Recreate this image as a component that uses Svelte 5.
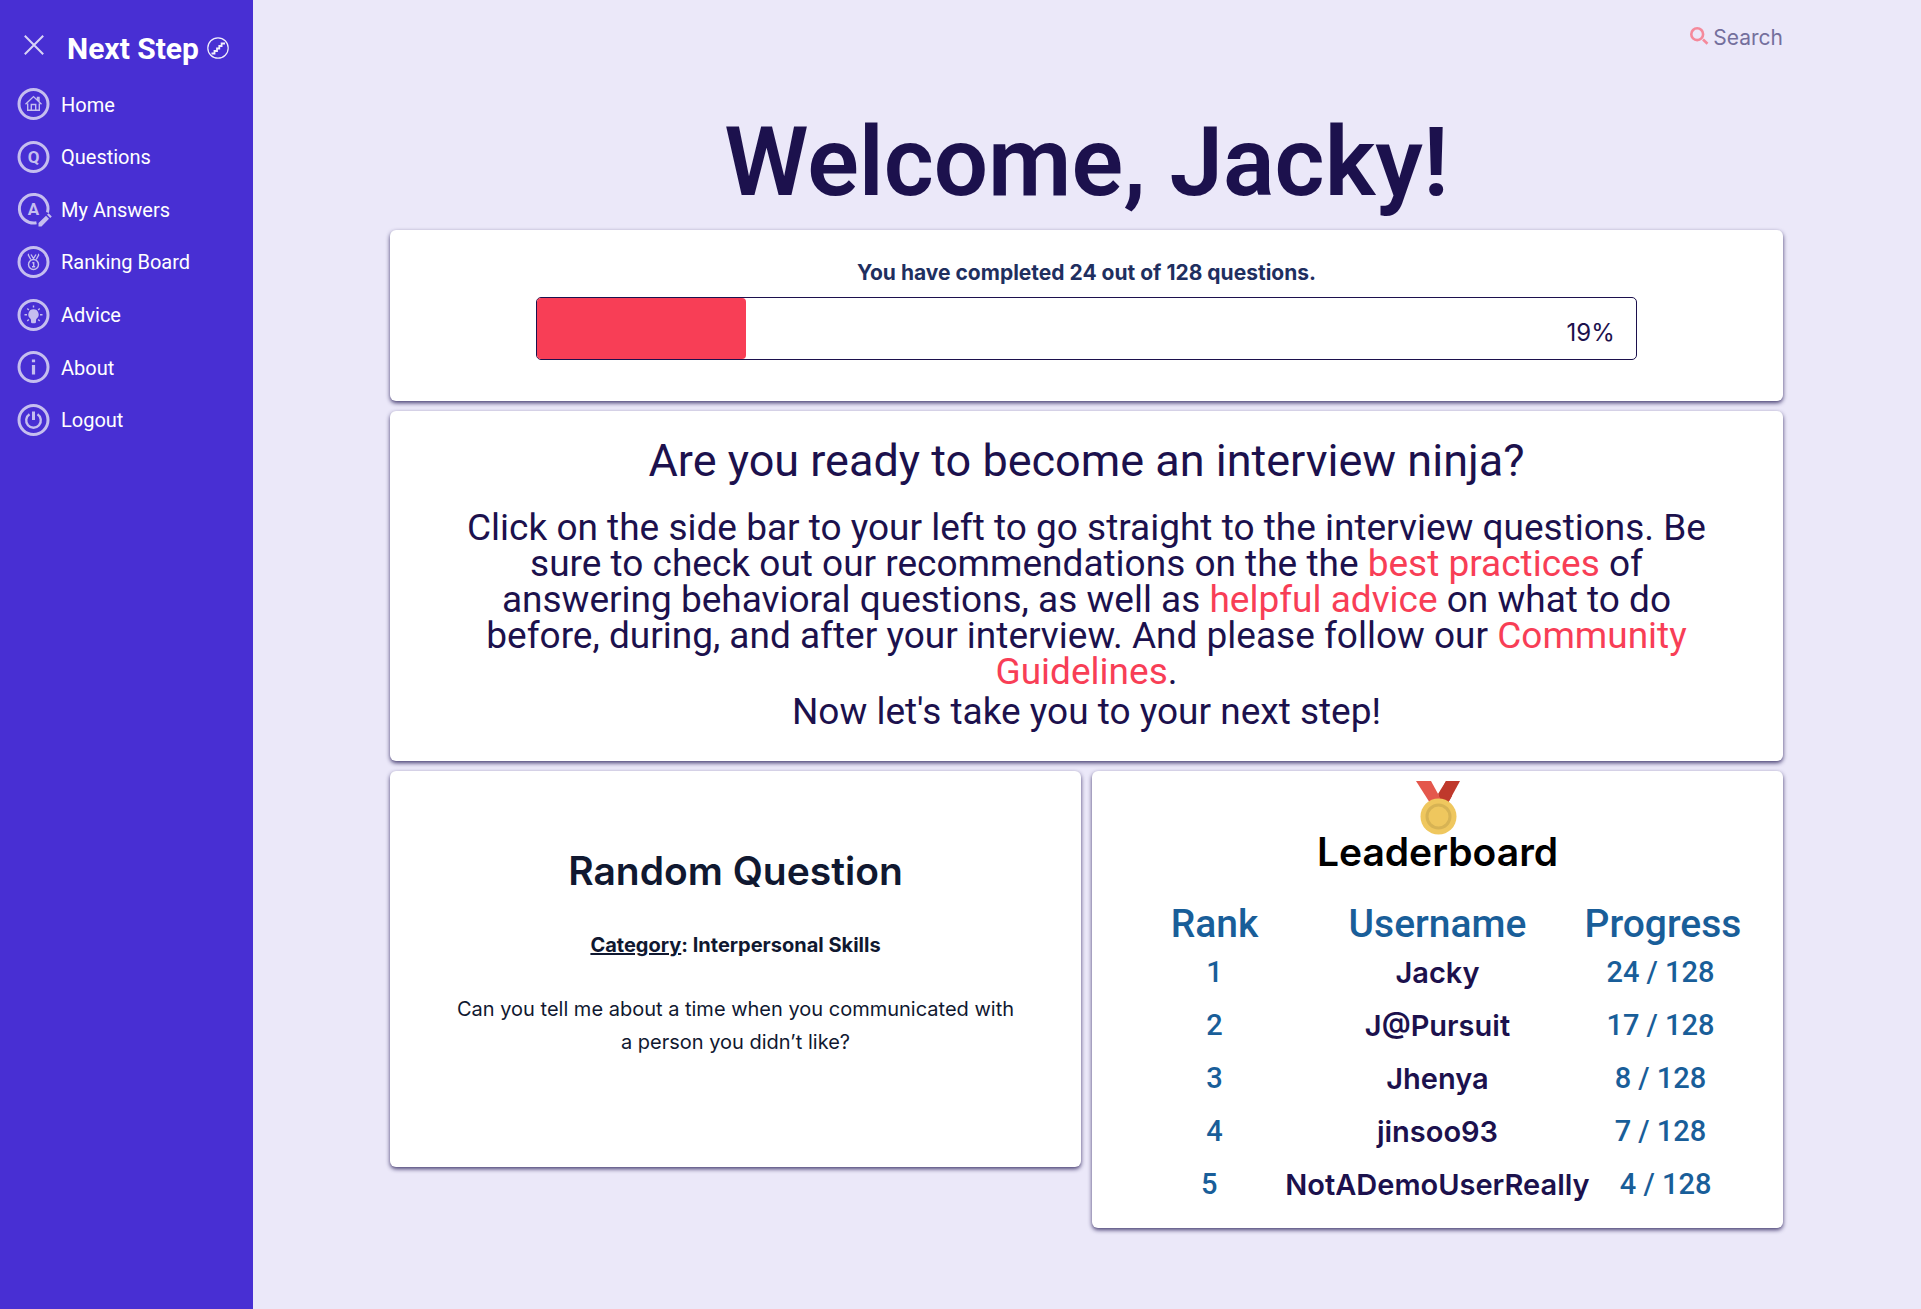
<script lang="ts">
  const completed = 24;
  const total = 128;
  const percent = Math.round((completed / total) * 100);

  const links = [
    { icon: 'home', label: 'Home' },
    { icon: 'questions', label: 'Questions' },
    { icon: 'answers', label: 'My Answers' },
    { icon: 'ranking', label: 'Ranking Board' },
    { icon: 'advice', label: 'Advice' },
    { icon: 'about', label: 'About' },
    { icon: 'logout', label: 'Logout' },
  ];

  const leaders = [
    { name: 'Jacky', done: 24 },
    { name: 'J@Pursuit', done: 17 },
    { name: 'Jhenya', done: 8 },
    { name: 'jinsoo93', done: 7 },
    { name: 'NotADemoUserReally', done: 4 },
  ];
</script>

<div class="page">
  <aside class="sidebar">
    <header class="brand">
      <button class="close" type="button" aria-label="Close menu">
        <svg width="20" height="20" viewBox="0 0 20 20"><path d="M.8.8 19.2 19.2M19.2.8.8 19.2" /></svg>
      </button>
      <a class="title" href="#top">
        Next Step
        <svg width="22" height="22" viewBox="0 0 22 22" aria-hidden="true">
          <circle cx="11" cy="11" r="10.2" />
          <path class="stairs" d="M4.500 16.500H7.500V14H10V11.500H12.300V9H14.600V6.500H18" />
        </svg>
      </a>
    </header>
    <nav>
      {#each links as link}
        <a href="#{link.icon}">
          <svg width="36" height="36" viewBox="0 0 36 36" aria-hidden="true">
            {#if link.icon === 'answers'}
              <path class="ring" d="M20.500 31.800A14.300 14.300 0 1 1 31.500 21.500" />
              <text x="17.500" y="24">A</text>
              <path class="solid" d="M22.500 35.500V32L30 24.800L33 27.800L25.500 35.500ZM31 23.800L32.600 22.300L35.800 25.400L34.200 27Z" />
            {:else}
              <circle class="ring" cx="17.500" cy="18" r="14.500" />
            {/if}
            {#if link.icon === 'home'}
              <path class="thin" d="M9.500 18.300 17.500 10.600 25.500 18.300M11.700 17.500V24.200H23.300V17.500M15.300 24V18.500H19.700V24M21.500 14V11.500H23V15.500" />
            {:else if link.icon === 'questions'}
              <text x="17.500" y="24">Q</text>
            {:else if link.icon === 'ranking'}
              <circle class="thin" cx="17.500" cy="20.500" r="5" />
              <path class="thin" d="M16.300 18.700H17.700V22.500M16 22.700H19.200M12 10.500 14.800 15.500M15 10.500 17.500 14.500 20 10.500M23 10.500 20.200 15.500M12 10.500H13M22 10.500H23" />
            {:else if link.icon === 'advice'}
              <path class="solid" d="M17.500 12.300a5.200 5.200 0 0 1 3.300 9.200c-.7.600-.8 1.200-.8 2v1.200q0 1.500-1.300 1.500h-2.400q-1.300 0-1.300-1.500v-1.200c0-.8-.1-1.400-.8-2a5.200 5.200 0 0 1 3.300-9.200z" />
              <path class="thin" d="M17.500 8.500V10.500M8.500 17.700H11M24 17.700H26.500M11.300 11.500 12.800 13M23.700 11.500 22.200 13M11.300 24 12.800 22.500M23.700 24 22.200 22.500" />
            {:else if link.icon === 'about'}
              <path class="solid" d="M15.900 10.500h3.200v2.800h-3.200zM15.900 16h3.200v9.500h-3.200z" />
            {:else if link.icon === 'logout'}
              <path class="power" d="M13.500 12.300A7.300 7.300 0 1 0 21.500 12.300" />
              <path class="power wide" d="M17.500 9.500V18" />
            {/if}
          </svg>
          <span>{link.label}</span>
        </a>
      {/each}
    </nav>
  </aside>

  <main id="top">
    <a class="search" href="#search">
      <svg width="19" height="18" viewBox="0 0 19 18" aria-hidden="true">
        <circle cx="7.200" cy="7.200" r="5.900" />
        <path d="M13 12.500 17.500 16.800" />
      </svg>
      Search
    </a>
    <h1>Welcome, Jacky!</h1>

    <section class="card status">
      <p id="progress-label">You have completed {completed} out of {total} questions.</p>
      <div class="track" role="progressbar" aria-labelledby="progress-label" aria-valuenow={percent} aria-valuemin="0" aria-valuemax="100">
        <div class="fill" style="width: {percent}%"></div>
        <span>{percent}%</span>
      </div>
    </section>

    <section class="card intro">
      <h2>Are you ready to become an interview ninja?</h2>
      <p>
        Click on the side bar to your left to go straight to the interview questions. Be
        sure to check out our recommendations on the the <a href="#practices">best practices</a> of
        answering behavioral questions, as well as <a href="#advice">helpful advice</a> on what to do
        before, during, and after your interview. And please follow our
        <a href="#guidelines">Community Guidelines</a>.
      </p>
      <p class="next">Now let's take you to your next step!</p>
    </section>

    <div class="columns">
      <section class="card random">
        <h2>Random Question</h2>
        <h3><u>Category</u>: Interpersonal Skills</h3>
        <p>Can you tell me about a time when you communicated with a person you didn’t like?</p>
      </section>

      <section class="card leaders">
        <svg width="44" height="54" viewBox="0 0 44 54" aria-hidden="true">
          <path fill="#bf392c" d="M30 0H44L32 22H19Z" />
          <path fill="#e4574c" d="M0 0H15L27 22H14Z" />
          <path fill="#bf392c" d="M22 13L27 22H32L36 15L30 0Z" />
          <circle cx="22.500" cy="35.500" r="18" fill="#efc75e" />
          <circle cx="22.500" cy="35.500" r="11.500" fill="none" stroke="#d7b354" stroke-width="3" />
        </svg>
        <h2>Leaderboard</h2>
        <table>
          <thead>
            <tr><th scope="col">Rank</th><th class="user" scope="col">Username</th><th scope="col">Progress</th></tr>
          </thead>
          <tbody>
            {#each leaders as leader, i}
              <tr><td>{i + 1}</td><td class="user">{leader.name}</td><td>{leader.done} / {total}</td></tr>
            {/each}
          </tbody>
        </table>
      </section>
    </div>
  </main>
</div>

<style>
  :global(body) {
    margin: 0;
    background: #ebe8f9;
  }

  .page {
    --ink: #1c114d;
    --red: #f83e56;
    --blue: #195e99;
    --round: Inter, 'Open Sans', sans-serif;
    display: flex;
    min-height: 100vh;
    color: var(--ink);
    font-family: Roboto, sans-serif;
  }

  h1, h2, h3, p {
    margin: 0;
  }

  a {
    color: inherit;
    text-decoration: none;
  }

  .sidebar {
    box-sizing: border-box;
    flex: 0 0 253px;
    padding-top: 24px;
    background: #482fd3;
    color: #fff;
  }

  .brand {
    display: flex;
    align-items: center;
    gap: 23px;
    height: 48px;
    padding-left: 24px;
  }

  .close {
    display: flex;
    padding: 0 0 6px;
    border: 0;
    background: none;
    cursor: pointer;
  }

  .close svg {
    fill: none;
    stroke: #d8d3f6;
    stroke-width: 2;
  }

  .title {
    display: flex;
    align-items: center;
    gap: 8px;
    font-size: 30px;
    font-weight: 700;
    white-space: nowrap;
  }

  .title svg {
    fill: none;
    stroke: #f1effc;
    stroke-width: 1.200;
  }

  .title .stairs {
    stroke-width: 1.800;
  }

  nav {
    display: grid;
    grid-auto-rows: 1fr;
    height: 368px;
    padding: 6px 0 0 16px;
  }

  nav a {
    display: flex;
    align-items: center;
    gap: 9px;
    font-size: 20px;
  }

  nav span {
    padding-top: 1px;
  }

  nav svg {
    fill: none;
    stroke: #c5beef;
  }

  nav .ring {
    stroke-width: 3;
  }

  nav .thin {
    stroke-width: 1.400;
  }

  nav .power {
    stroke-width: 2.400;
  }

  nav .wide {
    stroke-width: 3;
  }

  nav .solid, nav text {
    fill: #c5beef;
    stroke: none;
  }

  nav text {
    font-size: 17px;
    font-weight: 700;
    text-anchor: middle;
  }

  main {
    display: flex;
    flex: 1;
    flex-direction: column;
    min-width: 0;
    padding: 23px 138px 80px 137px;
  }

  .search {
    display: flex;
    align-items: center;
    align-self: flex-end;
    gap: 4px;
    height: 28px;
    color: #746f9d;
    font-family: var(--round);
    font-size: 21px;
  }

  .search svg {
    padding-bottom: 2px;
    fill: none;
    stroke: #f5899b;
    stroke-width: 2.600;
  }

  h1 {
    margin-top: 53px;
    font-size: 96px;
    font-weight: 600;
    line-height: 117px;
    text-align: center;
  }

  .card {
    box-sizing: border-box;
    border-radius: 6px;
    background: #fff;
    box-shadow: 0 2px 4px rgb(28 17 77 / 80%);
    text-align: center;
  }

  .status {
    display: flex;
    flex-direction: column;
    align-items: center;
    margin-top: 9px;
    padding: 28px 0 41px;
  }

  .status p {
    color: #1f2f5f;
    font-family: var(--round);
    font-size: 21px;
    font-weight: 700;
    line-height: 30px;
  }

  .track {
    display: flex;
    box-sizing: border-box;
    align-items: stretch;
    justify-content: space-between;
    width: 79%;
    height: 63px;
    margin-top: 9px;
    border: 1px solid var(--ink);
    border-radius: 5px;
  }

  .fill {
    border-radius: 4px;
    background: var(--red);
  }

  .track span {
    padding: 5px 21px 0 0;
    font-family: var(--round);
    font-size: 24px;
    line-height: 60px;
  }

  .intro {
    margin-top: 10px;
    padding: 23px 66px 31px;
  }

  .intro h2 {
    font-size: 45px;
    font-weight: 400;
    line-height: 54px;
  }

  .intro p {
    margin-top: 22px;
    font-size: 37px;
    line-height: 36px;
  }

  .intro .next {
    margin-top: 4px;
  }

  .intro a {
    color: var(--red);
  }

  .columns {
    display: grid;
    grid-template-columns: 1fr 1fr;
    align-items: start;
    gap: 11px;
    margin-top: 10px;
  }

  .random {
    padding: 75px 62px 108px;
    color: #101830;
    font-family: var(--round);
  }

  .random h2 {
    font-size: 39px;
    font-weight: 600;
    line-height: 50px;
  }

  .random h3 {
    margin-top: 31px;
    font-size: 20px;
    font-weight: 700;
    line-height: 36px;
  }

  .random p {
    margin-top: 30px;
    font-size: 20px;
    line-height: 33px;
  }

  .leaders {
    padding: 10px 10px 17px;
  }

  .leaders svg {
    display: block;
    margin: 0 auto;
  }

  .leaders h2 {
    color: #000;
    font-family: var(--round);
    font-size: 39px;
    font-weight: 600;
    line-height: 34px;
  }

  table {
    display: block;
    margin-top: 34px;
    color: var(--blue);
  }

  thead, tbody {
    display: block;
  }

  tr {
    display: flex;
    justify-content: center;
  }

  th, td {
    width: 152px;
    padding: 0;
    font-weight: 500;
    white-space: nowrap;
  }

  th {
    font-size: 39px;
    line-height: 43px;
  }

  td {
    font-size: 29px;
    line-height: 53px;
  }

  .user {
    width: auto;
    min-width: 294px;
  }

  td.user {
    color: var(--ink);
    font-family: var(--round);
    font-weight: 600;
  }
</style>
